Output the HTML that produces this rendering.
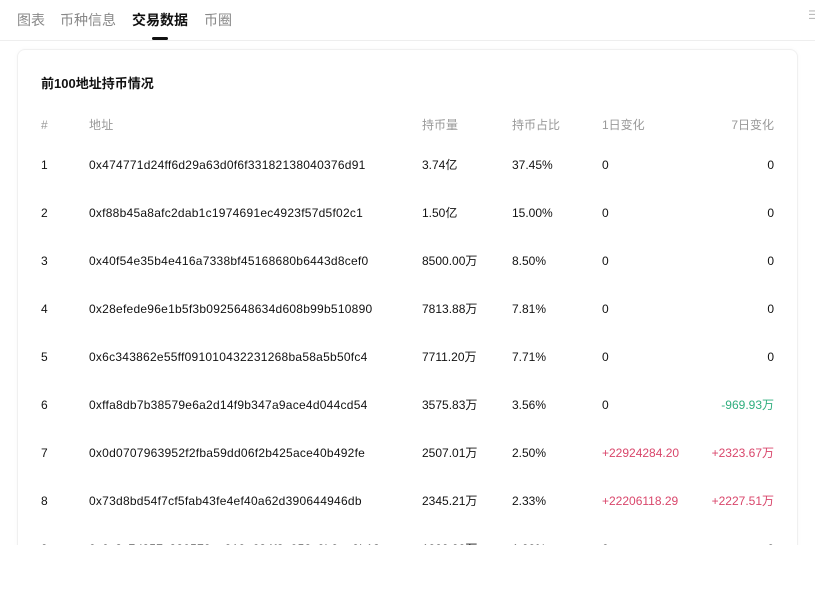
<!DOCTYPE html>
<html><head><meta charset="utf-8"><style>
*{margin:0;padding:0;box-sizing:border-box}
html,body{width:815px;height:590px;overflow:hidden}
body{background:#fff;font-family:"Liberation Sans","Noto Sans CJK SC",sans-serif;position:relative;color:#111}
.tab{position:absolute;top:11px;font-size:14px;color:#888;line-height:18px}
.tab.a{color:#111;font-weight:bold}
.ul{position:absolute;left:152px;top:37px;width:16px;height:3px;background:#111;border-radius:2px}
.line{position:absolute;left:0;right:0;top:40px;height:1px;background:#eee}
.card{position:absolute;left:17px;top:49px;width:781px;height:520px;border:1px solid #f0f0f0;border-radius:8px;box-shadow:0 0 5px rgba(0,0,0,.03)}
.clip{position:absolute;left:0;top:0;width:815px;height:545px;overflow:hidden}
.title{position:absolute;left:41px;top:75px;font-size:13px;font-weight:bold;line-height:18px}
.r{position:absolute;left:0;width:815px;font-size:12px;height:16px;line-height:16px}
.r span{position:absolute;top:1px;white-space:nowrap;line-height:16px;height:16px}
.h span{color:#999;font-size:12px}
.c0{left:41px}.c1{left:89px;letter-spacing:.25px}.c2{left:422px}.c3{left:512px}.c4{left:602px}.c5{right:41px;text-align:right}
.g{color:#2fae7e}.rd{color:#d9466b}
</style></head><body>
<div class="tab" style="left:17px">图表</div>
<div class="tab" style="left:60px">币种信息</div>
<div class="tab a" style="left:132px">交易数据</div>
<div class="tab" style="left:204px">币圈</div>
<div class="ul"></div>
<div style="position:absolute;left:808px;top:7px;color:#bbb;font-size:12px;line-height:16px">☰</div>
<div class="line"></div>
<div class="clip">
<div class="card"></div>
<div class="title">前100地址持币情况</div>
<div class="r h" style="top:116px"><span class="c0">#</span><span class="c1">地址</span><span class="c2">持币量</span><span class="c3">持币占比</span><span class="c4">1日变化</span><span class="c5">7日变化</span></div>
<div class="r" style="top:156px"><span class="c0">1</span><span class="c1">0x474771d24ff6d29a63d0f6f33182138040376d91</span><span class="c2">3.74亿</span><span class="c3">37.45%</span><span class="c4">0</span><span class="c5">0</span></div>
<div class="r" style="top:204px"><span class="c0">2</span><span class="c1">0xf88b45a8afc2dab1c1974691ec4923f57d5f02c1</span><span class="c2">1.50亿</span><span class="c3">15.00%</span><span class="c4">0</span><span class="c5">0</span></div>
<div class="r" style="top:252px"><span class="c0">3</span><span class="c1">0x40f54e35b4e416a7338bf45168680b6443d8cef0</span><span class="c2">8500.00万</span><span class="c3">8.50%</span><span class="c4">0</span><span class="c5">0</span></div>
<div class="r" style="top:300px"><span class="c0">4</span><span class="c1">0x28efede96e1b5f3b0925648634d608b99b510890</span><span class="c2">7813.88万</span><span class="c3">7.81%</span><span class="c4">0</span><span class="c5">0</span></div>
<div class="r" style="top:348px"><span class="c0">5</span><span class="c1">0x6c343862e55ff091010432231268ba58a5b50fc4</span><span class="c2">7711.20万</span><span class="c3">7.71%</span><span class="c4">0</span><span class="c5">0</span></div>
<div class="r" style="top:396px"><span class="c0">6</span><span class="c1">0xffa8db7b38579e6a2d14f9b347a9ace4d044cd54</span><span class="c2">3575.83万</span><span class="c3">3.56%</span><span class="c4">0</span><span class="c5 g">-969.93万</span></div>
<div class="r" style="top:444px"><span class="c0">7</span><span class="c1">0x0d0707963952f2fba59dd06f2b425ace40b492fe</span><span class="c2">2507.01万</span><span class="c3">2.50%</span><span class="c4 rd">+22924284.20</span><span class="c5 rd">+2323.67万</span></div>
<div class="r" style="top:492px"><span class="c0">8</span><span class="c1">0x73d8bd54f7cf5fab43fe4ef40a62d390644946db</span><span class="c2">2345.21万</span><span class="c3">2.33%</span><span class="c4 rd">+22206118.29</span><span class="c5 rd">+2227.51万</span></div>
<div class="r" style="top:540px"><span class="c0">9</span><span class="c1">0x0c3c7d257c280579ae919a634f3e058c9b9ae9b13</span><span class="c2">1999.99万</span><span class="c3">1.99%</span><span class="c4">0</span><span class="c5">0</span></div>
</div>
</body></html>
